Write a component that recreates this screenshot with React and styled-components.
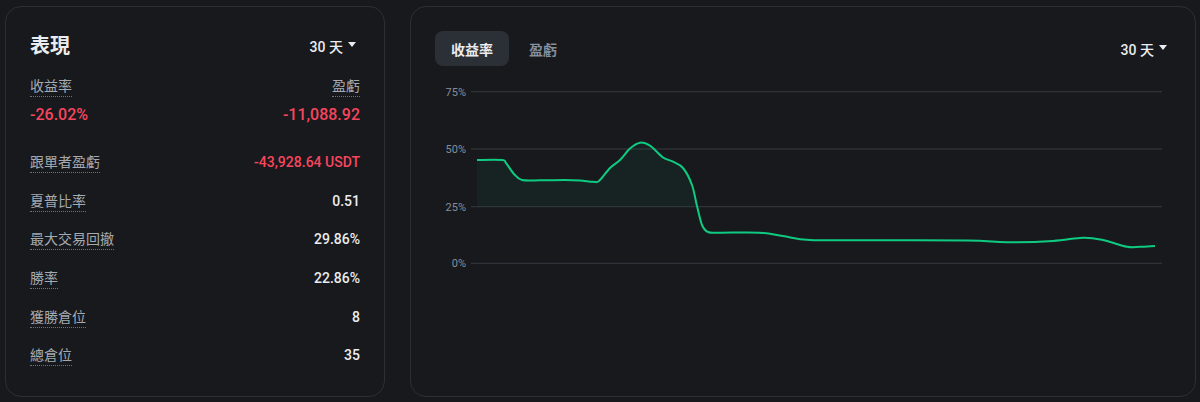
import React from 'react';
import styled, { createGlobalStyle } from 'styled-components';

const GlobalStyle = createGlobalStyle`
  html, body {
    margin: 0;
    padding: 0;
    background: #18191d;
  }
  body {
    font-family: Roboto, "Noto Sans CJK TC", sans-serif;
    color: #eaecef;
  }
`;

const Page = styled.div`
  display: flex;
  gap: 25px;
  padding: 6px 4px 5px 5px;
  height: 402px;
  box-sizing: border-box;
`;

const Card = styled.section`
  box-sizing: border-box;
  height: 391px;
  border: 1px solid #2b2f36;
  border-radius: 16px;
  background: #18191d;
  padding: 24px;
  ${(p) => (p.$width ? `width: ${p.$width}px; flex: none;` : 'flex: 1;')}
  display: flex;
  flex-direction: column;
`;

const CardHeader = styled.div`
  display: flex;
  align-items: center;
  justify-content: space-between;
  height: ${(p) => p.$h || 28}px;
  margin-top: ${(p) => p.$offset || 0}px;
`;

const Title = styled.h2`
  margin: 0;
  font-size: 20px;
  font-weight: 700;
  line-height: 28px;
  color: #eaecef;
`;

const PeriodSelect = styled.button`
  display: flex;
  align-items: center;
  gap: 5px;
  margin-right: 4px;
  padding: 0;
  border: 0;
  background: none;
  color: #eaecef;
  font-family: inherit;
  font-size: 14px;
  font-weight: 500;
  cursor: pointer;
`;

const Caret = styled.span`
  width: 0;
  height: 0;
  border-left: 4px solid transparent;
  border-right: 4px solid transparent;
  border-top: 5px solid #eaecef;
  margin-top: -3px;
`;

const TopStats = styled.div`
  display: grid;
  grid-template-columns: 1fr 1fr;
  row-gap: 6px;
  margin-top: 16px;
`;

const Label = styled.span`
  justify-self: ${(p) => (p.$right ? 'end' : 'start')};
  font-size: 14px;
  line-height: 20px;
  color: #a5a9b0;
  border-bottom: 1px dotted #6b727d;
`;

const BigValue = styled.span`
  justify-self: ${(p) => (p.$right ? 'end' : 'start')};
  font-size: 16px;
  font-weight: 500;
  line-height: 24px;
  color: #f6465d;
`;

const StatList = styled.div`
  display: flex;
  flex-direction: column;
  gap: 17.7px;
  margin-top: 25px;
`;

const StatRow = styled.div`
  display: flex;
  align-items: flex-start;
  justify-content: space-between;
  height: 21px;
`;

const StatValue = styled.span`
  font-size: 14px;
  font-weight: 500;
  line-height: 20px;
  color: ${(p) => (p.$down ? '#f6465d' : '#eaecef')};
`;

const Tabs = styled.div`
  display: flex;
  gap: 4px;
`;

const Tab = styled.button`
  height: 35px;
  padding: 0 16px;
  border: 0;
  border-radius: 8px;
  background: ${(p) => (p.$active ? '#2b2f36' : 'transparent')};
  color: ${(p) => (p.$active ? '#eaecef' : '#848e9c')};
  font-family: inherit;
  font-size: 14px;
  font-weight: 600;
  cursor: pointer;
`;

const ChartWrap = styled.div`
  margin-top: 14px;
`;

const AxisText = styled.text`
  font-family: Roboto, sans-serif;
  font-size: 11px;
  fill: #848e9c;
`;

const stats = [
  { label: '跟單者盈虧', value: '-43,928.64 USDT', down: true },
  { label: '夏普比率', value: '0.51' },
  { label: '最大交易回撤', value: '29.86%' },
  { label: '勝率', value: '22.86%' },
  { label: '獲勝倉位', value: '8' },
  { label: '總倉位', value: '35' },
];

// points in page coords (x, y), chart origin is at (435, 80)
const pts = [
  [477, 160], [502, 160], [506, 163], [514, 174], [522, 180], [540, 180.3],
  [565, 180], [580, 180.5], [593, 181.7], [599, 181], [610, 168], [620, 160],
  [630, 148.5], [640, 142.7], [650, 145.7], [663, 157.5], [673, 161.7],
  [683, 168], [692, 185], [697, 206], [702, 225], [708, 232], [720, 232.7],
  [760, 232.7], [783, 236], [810, 240], [870, 240.3], [967, 240.5],
  [1007, 242.3], [1053, 241], [1083, 237.7], [1103, 240], [1127, 246.7],
  [1140, 246.8], [1155, 246],
];

const toLocal = pts.map(([x, y]) => [x - 435, y - 80]);

function smoothPath(p) {
  let d = `M${p[0][0]},${p[0][1]}`;
  for (let i = 0; i < p.length - 1; i++) {
    const p0 = p[i - 1] || p[i];
    const p1 = p[i];
    const p2 = p[i + 1];
    const p3 = p[i + 2] || p2;
    const c1x = p1[0] + (p2[0] - p0[0]) / 6;
    const c1y = p1[1] + (p2[1] - p0[1]) / 6;
    const c2x = p2[0] - (p3[0] - p1[0]) / 6;
    const c2y = p2[1] - (p3[1] - p1[1]) / 6;
    d += ` C${c1x.toFixed(1)},${c1y.toFixed(1)} ${c2x.toFixed(1)},${c2y.toFixed(1)} ${p2[0]},${p2[1]}`;
  }
  return d;
}

const grid = [
  { y: 11.7, label: '75%' },
  { y: 69, label: '50%' },
  { y: 126.7, label: '25%' },
  { y: 183.3, label: '0%' },
];

const Chart = () => {
  const line = smoothPath(toLocal);
  const base = 126.7;
  const last = toLocal[toLocal.length - 1];
  const area = `${line} L${last[0]},${base} L${toLocal[0][0]},${base} Z`;
  return (
    <svg width="736" height="195" viewBox="0 0 736 195">
      <defs>
        <clipPath id="aboveBase">
          <rect x="0" y="0" width="736" height={base} />
        </clipPath>
      </defs>
      {grid.map((g) => (
        <g key={g.label}>
          <line x1="36" x2="727" y1={g.y} y2={g.y} stroke="#363a41" strokeWidth="1" />
          <AxisText x="31" y={g.y + 4} textAnchor="end">
            {g.label}
          </AxisText>
        </g>
      ))}
      <path d={area} fill="rgba(14, 203, 129, 0.06)" clipPath="url(#aboveBase)" />
      <path d={line} fill="none" stroke="#0ecb81" strokeWidth="2" strokeLinejoin="round" />
    </svg>
  );
};

const App = () => (
  <>
    <GlobalStyle />
    <Page>
      <Card $width={380}>
        <CardHeader $offset={1}>
          <Title>表現</Title>
          <PeriodSelect>
            30 天 <Caret />
          </PeriodSelect>
        </CardHeader>
        <TopStats>
          <Label>收益率</Label>
          <Label $right>盈虧</Label>
          <BigValue>-26.02%</BigValue>
          <BigValue $right>-11,088.92</BigValue>
        </TopStats>
        <StatList>
          {stats.map((s) => (
            <StatRow key={s.label}>
              <Label>{s.label}</Label>
              <StatValue $down={s.down}>{s.value}</StatValue>
            </StatRow>
          ))}
        </StatList>
      </Card>
      <Card>
        <CardHeader $h={35}>
          <Tabs>
            <Tab $active>收益率</Tab>
            <Tab>盈虧</Tab>
          </Tabs>
          <PeriodSelect>
            30 天 <Caret />
          </PeriodSelect>
        </CardHeader>
        <ChartWrap>
          <Chart />
        </ChartWrap>
      </Card>
    </Page>
  </>
);

export default App;
